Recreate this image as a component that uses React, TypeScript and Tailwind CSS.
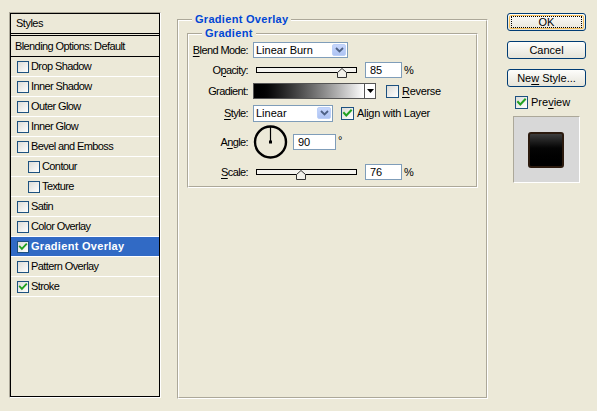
import React from "react";

const FONT = "font-['Liberation_Sans',Arial,sans-serif]";

function Check({ checked = false, size = 13 }: { checked?: boolean; size?: number }) {
  return (
    <div
      className="shrink-0 border border-[#1c5180] bg-gradient-to-br from-[#dcdcd7] to-white flex items-center justify-center"
      style={{ width: size, height: size }}
    >
      {checked && (
        <svg width={size - 2} height={size - 2} viewBox="0 0 11 11">
          <path d="M2 5 L4.3 7.5 L9 2.5" fill="none" stroke="#21a121" strokeWidth="2" strokeLinecap="square" />
        </svg>
      )}
    </div>
  );
}

function U({ children }: { children: React.ReactNode }) {
  return <span className="underline underline-offset-[2px] decoration-[1px]">{children}</span>;
}

function DropBtn() {
  return (
    <div className="w-[14px] h-[12px] rounded-[2px] bg-gradient-to-b from-[#c6d6fc] to-[#aec3f2] border border-[#bcd0f8] flex items-center justify-center">
      <svg width="9" height="6" viewBox="0 0 9 6">
        <path d="M1 1 L4.5 4.5 L8 1" fill="none" stroke="#4d6185" strokeWidth="1.8" />
      </svg>
    </div>
  );
}

function Slider({ pos }: { pos: number }) {
  return (
    <div className="relative w-[101px] h-[16px] flex items-center ml-[3px]">
      <div className="w-[101px] h-[6px] border border-black bg-[#f4f3ee]" />
      <svg
        className="absolute top-[6px]"
        style={{ left: pos }}
        width="10"
        height="10"
        viewBox="0 0 10 10"
      >
        <path d="M0.5 9.5 L0.5 4.5 L5 0.5 L9.5 4.5 L9.5 9.5 Z" fill="#f2f1ea" stroke="#333" strokeWidth="1" />
      </svg>
    </div>
  );
}

function TextBox({ value, w }: { value: string; w: number }) {
  return (
    <div
      className="h-[16px] border border-[#7f9db9] bg-white flex items-center pl-[4px] text-[11px] text-black"
      style={{ width: w }}
    >
      {value}
    </div>
  );
}

const layers = [
  { label: "Drop Shadow" },
  { label: "Inner Shadow" },
  { label: "Outer Glow" },
  { label: "Inner Glow" },
  { label: "Bevel and Emboss" },
  { label: "Contour", indent: true },
  { label: "Texture", indent: true },
  { label: "Satin" },
  { label: "Color Overlay" },
  { label: "Gradient Overlay", checked: true, selected: true },
  { label: "Pattern Overlay" },
  { label: "Stroke", checked: true },
];

function Label({ children }: { children: React.ReactNode }) {
  return (
    <div className="w-[59px] shrink-0 text-right pr-0 tracking-[-0.6px] text-black text-[11px]">{children}</div>
  );
}

export default function App() {
  return (
    <div className={`w-[597px] h-[411px] bg-[#ece9d8] flex items-start ${FONT} text-[11px] text-black leading-none`}>
      {/* Left styles list */}
      <div className="ml-[9px] mt-[12px] w-[152px] h-[386px] border-l border-t border-[#aca899] border-r border-b border-r-white border-b-white">
        <div className="h-full border border-black flex flex-col">
          <div className="h-[20px] border-b border-black flex items-center pl-[5px] tracking-[-0.5px]">Styles</div>
          <div className="h-[1px] shrink-0" />
          <div className="h-[22px] border-t border-b border-black flex items-center pl-[4px] tracking-[-0.6px]">
            Blending Options: Default
          </div>
          {layers.map((l) => (
            <div
              key={l.label}
              className={`h-[20px] shrink-0 border-b border-white flex items-center gap-[2px] ${
                l.indent ? "pl-[17px]" : "pl-[6px]"
              } ${l.selected ? "bg-[#316ac5] text-white font-bold tracking-[0.3px]" : "tracking-[-0.6px]"}`}
            >
              <Check checked={l.checked} size={12} />
              <span>{l.label}</span>
            </div>
          ))}
        </div>
      </div>

      {/* Gradient Overlay group */}
      <div className="relative ml-[16px] mt-[19px] w-[311px] h-[380px] border-l border-t border-[#aca899] border-r border-b border-r-white border-b-white">
        <div className="h-full border-l border-t border-white border-r border-b border-r-[#aca899] border-b-[#aca899]">
          <span className="absolute -top-[6px] left-[14px] px-[3px] bg-[#ece9d8] text-[#0046d5] font-bold tracking-[0.3px]">
            Gradient Overlay
          </span>
          <div className="relative ml-[8px] mt-[12px] w-[291px] h-[155px] border-l border-t border-[#aca899] border-r border-b border-r-white border-b-white">
            <div className="h-full border-l border-t border-white border-r border-b border-r-[#aca899] border-b-[#aca899] flex flex-col">
              <span className="absolute -top-[6px] left-[14px] px-[3px] bg-[#ece9d8] text-[#0046d5] font-bold tracking-[0.3px]">
                Gradient
              </span>
              {/* Blend mode */}
              <div className="mt-[7px] h-[16px] flex items-center gap-[5px]">
                <Label>
                  <U>B</U>lend Mode:
                </Label>
                <div className="w-[95px] h-[16px] border border-[#7f9db9] bg-white flex items-center justify-between pl-[2px] pr-[1px]">
                  <span>Linear Burn</span>
                  <DropBtn />
                </div>
              </div>
              {/* Opacity */}
              <div className="mt-[4px] h-[16px] flex items-center gap-[5px]">
                <Label>
                  O<U>p</U>acity:
                </Label>
                <Slider pos={81} />
                <div className="ml-[3px]">
                  <TextBox value="85" w={37} />
                </div>
                <span className="ml-[-3px]">%</span>
              </div>
              {/* Gradient */}
              <div className="mt-[5px] h-[16px] flex items-center gap-[5px]">
                <Label>Gradient:</Label>
                <div className="w-[123px] h-[16px] border border-[#555] flex bg-white">
                  <div className="flex-1 h-full bg-gradient-to-r from-black to-white border-r border-[#555]" />
                  <div className="w-[10px] h-full flex items-center justify-center">
                    <svg width="7" height="4" viewBox="0 0 7 4">
                      <path d="M0 0 L7 0 L3.5 4 Z" fill="#000" />
                    </svg>
                  </div>
                </div>
                <div className="ml-[5px] flex items-center gap-[3px]">
                  <Check />
                  <span className="tracking-[-0.3px]">
                    <U>R</U>everse
                  </span>
                </div>
              </div>
              {/* Style */}
              <div className="mt-[6px] h-[16px] flex items-center gap-[5px]">
                <Label>
                  <U>S</U>tyle:
                </Label>
                <div className="w-[80px] h-[17px] border border-[#7f9db9] bg-white flex items-center justify-between pl-[2px] pr-[1px]">
                  <span>Linear</span>
                  <DropBtn />
                </div>
                <div className="ml-[3px] flex items-center gap-[3px]">
                  <Check checked />
                  <span className="tracking-[-0.3px]">
                    Al<U>i</U>gn with Layer
                  </span>
                </div>
              </div>
              {/* Angle */}
              <div className="mt-[4px] h-[34px] flex items-center gap-[5px]">
                <Label>
                  A<U>n</U>gle:
                </Label>
                <svg width="35" height="34" viewBox="0 0 35 34">
                  <circle cx="17.5" cy="17" r="15.5" fill="none" stroke="#000" strokeWidth="2.4" />
                  <line x1="17.5" y1="17" x2="17.5" y2="2" stroke="#000" strokeWidth="1.2" />
                  <rect x="16" y="15.5" width="3" height="3" fill="#000" />
                </svg>
                <TextBox value="90" w={43} />
                <span className="self-start mt-[10px] ml-[-3px]">°</span>
              </div>
              {/* Scale */}
              <div className="mt-[5px] h-[16px] flex items-center gap-[5px]">
                <Label>
                  <U>S</U>cale:
                </Label>
                <Slider pos={40} />
                <div className="ml-[3px]">
                  <TextBox value="76" w={37} />
                </div>
                <span className="ml-[-3px]">%</span>
              </div>
            </div>
          </div>
        </div>
      </div>

      {/* Buttons column */}
      <div className="ml-[19px] mt-[13px] flex flex-col">
        <button className="w-[79px] h-[18px] rounded-[3px] border border-[#003c74] bg-gradient-to-b from-[#fdfdfb] to-[#e6e4d9] p-[1px]">
          <div className="w-full h-full rounded-[2px] border border-[#f5c05b] flex items-center justify-center">
            <div className="w-[71px] h-[12px] border border-dotted border-black flex items-center justify-center text-[11px]">
              OK
            </div>
          </div>
        </button>
        <button className="mt-[10px] w-[79px] h-[18px] rounded-[3px] border border-[#003c74] bg-gradient-to-b from-[#fdfdfb] to-[#e6e4d9] flex items-center justify-center text-[11px]">
          Cancel
        </button>
        <button className="mt-[10px] w-[79px] h-[18px] rounded-[3px] border border-[#003c74] bg-gradient-to-b from-[#fdfdfb] to-[#e6e4d9] flex items-center justify-center text-[11px]">
          <span>
            Ne<U>w</U> Style...
          </span>
        </button>
        <div className="mt-[9px] ml-[8px] flex items-center gap-[3px]">
          <Check checked />
          <span>
            Pre<U>v</U>iew
          </span>
        </div>
        <div className="mt-[7px] ml-[6px] w-[67px] h-[67px] border-l border-t border-[#aca899] border-r border-b border-r-white border-b-white bg-[#d8d8d8] pl-[14px] pt-[15px]">
          <div className="w-[36px] h-[36px] rounded-[3px] border-2 border-[#2b1a0e] bg-gradient-to-b from-[#3e3e3e] via-[#050505] via-45% to-black" />
        </div>
      </div>
    </div>
  );
}
